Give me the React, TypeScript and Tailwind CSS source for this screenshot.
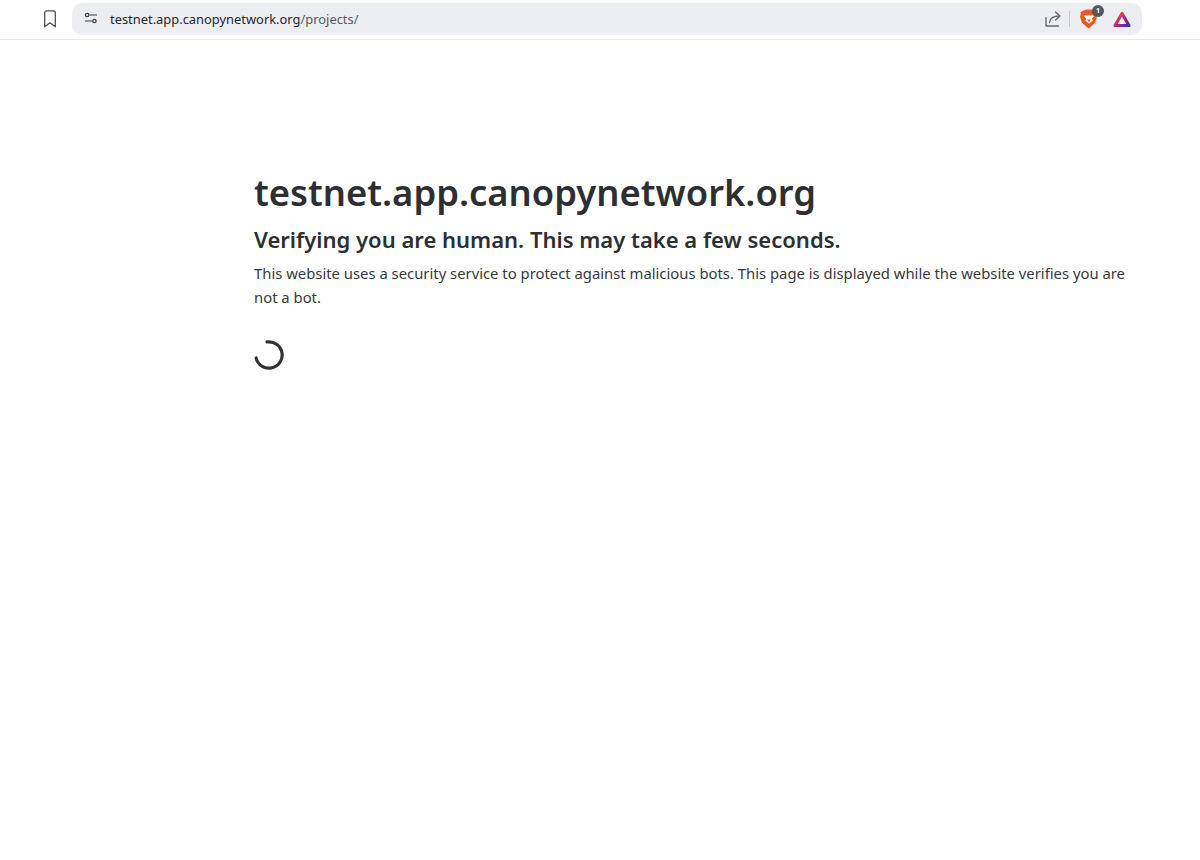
const font = "[font-family:'Noto_Sans',sans-serif]"

function BookmarkIcon() {
  return (
    <svg viewBox="0 0 14 18" width="14" height="18" fill="none" stroke="#4f5054" strokeWidth="1.300" strokeLinejoin="round">
      <path d="M1.700 2.600a1.700 1.700 0 0 1 1.700-1.700h7.200a1.700 1.700 0 0 1 1.700 1.700V16.800L7 12.800 1.700 16.800z" />
    </svg>
  )
}

function ShareIcon() {
  return (
    <svg viewBox="0 0 16 16" width="16" height="16" fill="none" stroke="#66676b" strokeWidth="1.300" strokeLinecap="round" strokeLinejoin="round">
      <path d="M1 6.500V15h12.500" />
      <path d="M4.500 11.500C5 7.500 8 5 14.500 5" />
      <path d="M10.500 1 15 5l-4.500 4" />
    </svg>
  )
}

function BraveIcon() {
  return (
    <svg viewBox="0 0 20 22" width="18" height="20">
      <path d="M4 1.500 7 .5h6l3 1 2.500 2-.5 2 1 2.500-2 7-5.500 5L10 21.500 7.500 20 2 15 0 8l1-2.500-.5-2z" fill="#f1561f" />
      <path d="M5.500 6.500 8 7l2-.8L12 7l2.500-.5 1 1.500L13 11l1.300 2-2.300 1.300-2 2-2-2L5.700 13 7 11 4.500 8z" fill="#fff" />
      <path d="M8 11.500h4L10 14.500z" fill="#f1561f" />
    </svg>
  )
}

function TriangleLogo() {
  return (
    <svg viewBox="0 0 20 18" width="20" height="18">
      <defs>
        <linearGradient id="aurora" x1="0" y1="0" x2="1" y2="0.800">
          <stop offset="0" stopColor="#f4603a" />
          <stop offset="0.500" stopColor="#c02a6c" />
          <stop offset="1" stopColor="#4f2a9e" />
        </linearGradient>
      </defs>
      <path d="M10 3.500 17 15.500H3z" fill="none" stroke="url(#aurora)" strokeWidth="3.200" strokeLinejoin="round" />
    </svg>
  )
}

export default function App() {
  return (
    <div className={`min-h-[860px] bg-white ${font}`}>
      {/* Browser toolbar */}
      <div className="h-10 flex items-start pt-[3px] border-b border-[#e8e8ea]">
        <div className="w-[72px] h-8 flex items-center shrink-0 pl-[43px]">
          <BookmarkIcon />
        </div>
        <div className="w-[1070px] h-8 rounded-[10px] bg-[#edeef2] flex items-center">
          <div className="w-[38px] flex justify-center shrink-0 pb-[2px]">
            <svg viewBox="0 0 16 14" width="14" height="12" fill="none" stroke="#3f4043" strokeWidth="1.400">
              <circle cx="3.500" cy="3.500" r="2" />
              <path d="M6 3.500h9M1 10.500h8.500" />
              <circle cx="12" cy="10.500" r="2" />
            </svg>
          </div>
          <div className="text-[12.900px] text-[#26272a] pt-[1px]">
            testnet.app.canopynetwork.org<span className="text-[#5a5b60]">/projects/</span>
          </div>
          <div className="ml-auto flex items-center pr-[10px]">
            <ShareIcon />
            <div className="w-px h-4 bg-[#c8c9ce] ml-2 mr-[10px]" />
            <div className="relative mr-[14px] flex">
              <BraveIcon />
              <div className="absolute -top-[4px] -right-[6px] w-3 h-3 rounded-full bg-[#55575e] text-white text-[7px] leading-3 text-center font-bold">
                1
              </div>
            </div>
            <TriangleLogo />
          </div>
        </div>
      </div>

      {/* Challenge page */}
      <div className="pl-[254px] pr-[70px] pt-[122px] text-[#2d2f32]">
        <h1 className="text-[36.400px] leading-[60px] font-semibold">testnet.app.canopynetwork.org</h1>
        <h2 className="text-[22px] leading-[36px] font-semibold -mt-px">
          Verifying you are human. This may take a few seconds.
        </h2>
        <p className="text-[14.830px] leading-[24px] mt-1 text-[#37393c]">
          This website uses a security service to protect against malicious bots. This page is displayed while the website verifies you are not a bot.
        </p>
        <svg viewBox="0 0 30 30" width="30" height="30" className="mt-[31px]" fill="none">
          <path d="M13 1.950A13.200 13.200 0 1 1 2.100 18" stroke="#313336" strokeWidth="3.200" strokeLinecap="round" />
        </svg>
      </div>
    </div>
  )
}
